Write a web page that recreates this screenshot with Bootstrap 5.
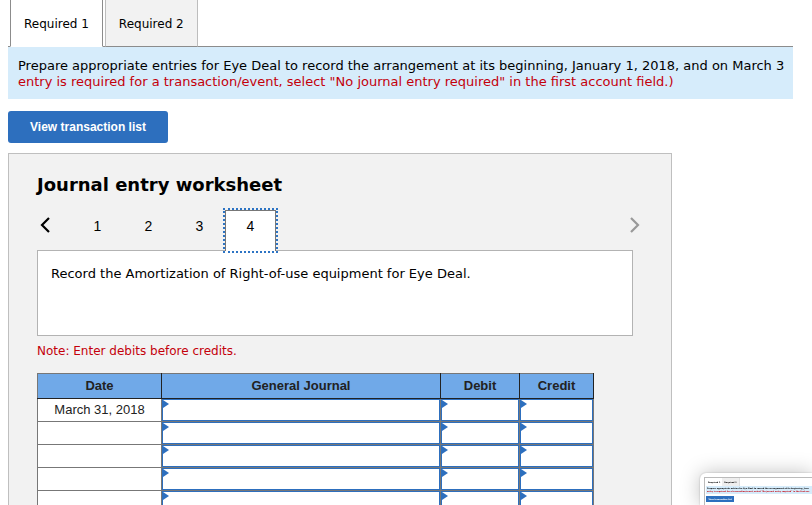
<!DOCTYPE html>
<html lang="en">
<head>
<meta charset="utf-8">
<meta name="viewport" content="width=device-width, initial-scale=1">
<title>Journal entry worksheet</title>
<link rel="stylesheet" href="https://cdn.jsdelivr.net/npm/bootstrap@5.3.0/dist/css/bootstrap.min.css">
<style>
body { font-family: Verdana, "DejaVu Sans", sans-serif; font-size: 13px; line-height: 16px; color: #000; height: 100vh; overflow: hidden; background: #fff; }
.page-main { padding: 0 19px 0 8px; }
.req-tabs { border-bottom: 1px solid #8c8c8c; padding-left: 2px; gap: 2px; }
.req-tabs .nav-link { font-size: 12px; line-height: 16px; height: 47px; padding: 16px 13px 14px; margin-bottom: -1px; border: 1px solid #bdbdbd; border-width: 0 1px 1px; border-radius: 0; color: #000; background: #f2f2f2; border-bottom-color: #8c8c8c; }
.req-tabs .nav-link.active { background: #fff; border-color: #8c8c8c; border-bottom-color: #fff; color: #000; }
.prompt { background: #d6ecfb; padding: 11px 0 9px 10px; height: 52px; }
.prompt p { white-space: nowrap; }
.red { color: #c4000b; }
.btn-view { width: 160px; height: 32px; margin: 12px 0 10px; padding: 0; border: 0; border-radius: 3px; background: #2d6fbe; color: #fff; font: bold 12px "Liberation Sans", Arial, sans-serif; }
.btn-view:hover { background: #2a65ad; color: #fff; }
.worksheet { max-width: 664px; border: 1px solid #bfbfbf; background: #f2f2f2; padding: 20px 31px 30px 28px; }
.worksheet h1 { font-size: 18px; line-height: 22px; font-weight: bold; margin-bottom: 14px; }
.pager button { border: 0; background: none; padding: 0; height: 41px; width: 51px; color: #000; font: 14px/32px "Liberation Sans", Arial, sans-serif; display: flex; justify-content: center; }
.pager .prev { width: 35px; justify-content: flex-start; }
.pager .next { width: 20px; justify-content: flex-end; }
.pager svg { margin-top: 6px; }
.pager .current { background: #fff; border: 1px solid #777; border-bottom: 0; outline: 2px dotted #2d74c4; position: relative; z-index: 1; line-height: 30px; }
.desc { background: #fff; border: 1px solid #b3b3b3; margin: -1px 7px 7px 0; padding: 15px 13px; min-height: 86px; }
.note { font-size: 12px; margin-bottom: 14px; }
.journal { width: 100%; max-width: 557px; table-layout: fixed; border-collapse: collapse; background: #fff; font: 13px/16px "Liberation Sans", Arial, sans-serif; color: #222; }
.journal th { background: #70a9e8; height: 25px; padding: 0; text-align: center; border: 1px solid #222; border-top-color: #777; }
.journal th:first-child { border-left-color: #777; }
.journal td { height: 23px; padding: 0; border: 1px solid #777; text-align: center; position: relative; }
.journal .c-date { width: 124px; }
.journal .c-debit { width: 79px; }
.journal .c-credit { width: 74px; }
.journal input { display: block; width: 100%; height: 22px; padding: 0 8px; border: 1px solid #2d6fbe; border-radius: 0; background: #fff; outline: 0; }
.journal .cell-in::after { content: ""; position: absolute; left: 1px; top: 1px; border: solid transparent; border-width: 4px 0 4px 6px; border-left-color: #2d6fbe; }
.preview { position: fixed; right: 0; bottom: 0; width: 112px; height: 32px; padding: 4px 0 0 4px; background: #fff; border-radius: 6px 0 0 0; box-shadow: 0 0 20px rgba(0,0,0,.25), 0 0 2px rgba(0,0,0,.25); overflow: hidden; font-size: 2px; line-height: 3px; white-space: nowrap; font-weight: bold; }
.preview-page { border: 1px solid #bbb; border-width: 1px 0 0 1px; height: 28px; padding-left: 1px; }
.preview-tabs span { height: 8px; padding: 3px 2px 0; }
.preview-tabs span + span { background: #eee; border-right: 1px solid #ddd; }
.preview-prompt { background: #d6ecfb; height: 8px; padding: 1px 0 0 1px; }
.preview-btn { background: #2d6fbe; color: #fff; width: 28px; height: 6px; line-height: 6px; margin-top: 2px; text-align: center; }
</style>
<script src="https://cdn.jsdelivr.net/npm/bootstrap@5.3.0/dist/js/bootstrap.bundle.min.js"></script>
</head>
<body>
<main class="page-main">
  <nav class="nav req-tabs" aria-label="Requirements">
    <a class="nav-link active" href="#req1" aria-current="page">Required 1</a>
    <a class="nav-link" href="#req2">Required 2</a>
  </nav>
  <section class="prompt overflow-hidden" id="req1">
    <p class="m-0">Prepare appropriate entries for Eye Deal to record the arrangement at its beginning, January 1, 2018, and on March 3</p>
    <p class="m-0 red">entry is required for a transaction/event, select "No journal entry required" in the first account field.)</p>
  </section>
  <button type="button" class="btn btn-view d-block">View transaction list</button>
  <section class="worksheet">
    <h1>Journal entry worksheet</h1>
    <div class="pager d-flex align-items-start">
      <button type="button" class="prev" aria-label="Previous entry"><svg width="16" height="18" viewBox="0 0 16 18" fill="none" stroke="#000" stroke-width="2.2"><path d="M12 2 5 9l7 7"/></svg></button>
      <button type="button">1</button>
      <button type="button">2</button>
      <button type="button">3</button>
      <button type="button" class="current" aria-current="true">4</button>
      <button type="button" class="next ms-auto" aria-label="Next entry"><svg width="12" height="18" viewBox="0 0 12 18" fill="none" stroke="#999" stroke-width="2.2"><path d="m3 2 7 7-7 7"/></svg></button>
    </div>
    <div class="desc">Record the Amortization of Right-of-use equipment for Eye Deal.</div>
    <p class="note red">Note: Enter debits before credits.</p>
    <table class="journal">
      <colgroup><col class="c-date"><col><col class="c-debit"><col class="c-credit"></colgroup>
      <thead><tr><th scope="col">Date</th><th scope="col">General Journal</th><th scope="col">Debit</th><th scope="col">Credit</th></tr></thead>
      <tbody>
        <tr><td>March 31, 2018</td><td class="cell-in"><input type="text" aria-label="Account, row 1"></td><td class="cell-in"><input type="text" aria-label="Debit, row 1"></td><td class="cell-in"><input type="text" aria-label="Credit, row 1"></td></tr>
        <tr><td></td><td class="cell-in"><input type="text" aria-label="Account, row 2"></td><td class="cell-in"><input type="text" aria-label="Debit, row 2"></td><td class="cell-in"><input type="text" aria-label="Credit, row 2"></td></tr>
        <tr><td></td><td class="cell-in"><input type="text" aria-label="Account, row 3"></td><td class="cell-in"><input type="text" aria-label="Debit, row 3"></td><td class="cell-in"><input type="text" aria-label="Credit, row 3"></td></tr>
        <tr><td></td><td class="cell-in"><input type="text" aria-label="Account, row 4"></td><td class="cell-in"><input type="text" aria-label="Debit, row 4"></td><td class="cell-in"><input type="text" aria-label="Credit, row 4"></td></tr>
        <tr><td></td><td class="cell-in"><input type="text" aria-label="Account, row 5"></td><td class="cell-in"><input type="text" aria-label="Debit, row 5"></td><td class="cell-in"><input type="text" aria-label="Credit, row 5"></td></tr>
      </tbody>
    </table>
  </section>
</main>
<aside class="preview" aria-label="Page preview">
  <div class="preview-page">
    <div class="preview-tabs d-flex"><span>Required 1</span><span>Required 2</span></div>
    <div class="preview-prompt">
      <div>Prepare appropriate entries for Eye Deal to record the arrangement at its beginning, Janu</div>
      <div class="red">entry is required for a transaction/event, select "No journal entry required" in the first acc</div>
    </div>
    <div class="preview-btn">View transaction list</div>
  </div>
</aside>
</body>
</html>
